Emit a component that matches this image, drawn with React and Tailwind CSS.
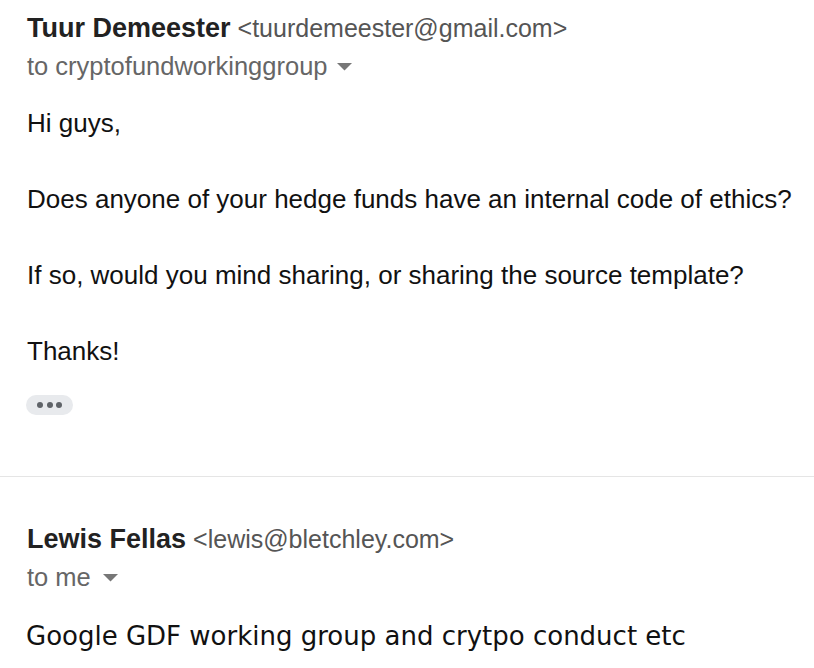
import React from 'react';

const sans = { fontFamily: '"Liberation Sans", Arial, Helvetica, sans-serif' };

const Caret = ({ gap }) => (
  <svg width="15" height="8" viewBox="0 0 15 8" className={gap}>
    <path d="M0 0 L15 0 L7.5 7.5 Z" fill="#777777" />
  </svg>
);

const Header = ({ name, email, to, caretGap }) => (
  <div className="pl-[27px]" style={sans}>
    <div className="flex items-baseline h-[30px] leading-[30px]">
      <span className="text-[27px] font-bold text-[#222222]">{name}</span>
      <span className="ml-[7px] text-[25px] text-[#555555]">{email}</span>
    </div>
    <div className="flex items-center mt-[8px] h-[30px] leading-[30px] text-[25.5px] text-[#666666]">
      <span>{to}</span>
      <Caret gap={caretGap} />
    </div>
  </div>
);

export default function App() {
  return (
    <div className="w-[814px] h-[668px] bg-white overflow-hidden">
      <div className="pt-[13px]">
        <Header
          name="Tuur Demeester"
          email="<tuurdemeester@gmail.com>"
          to="to cryptofundworkinggroup"
          caretGap="ml-[9px] mt-[1px]"
        />
        <div className="pl-[27px] mt-[23px] text-[26px] leading-[38px] text-[#111111]" style={sans}>
          <p>Hi guys,</p>
          <p>&nbsp;</p>
          <p>Does anyone of your hedge funds have an internal code of ethics?</p>
          <p>&nbsp;</p>
          <p>If so, would you mind sharing, or sharing the source template?</p>
          <p>&nbsp;</p>
          <p>Thanks!</p>
        </div>
        <div className="pl-[26px] mt-[25px]">
          <div className="w-[47px] h-[20px] rounded-full bg-[#e8eaed] flex items-center justify-center gap-[3.5px]">
            <span className="w-[6px] h-[6px] rounded-full bg-[#5f6368]" />
            <span className="w-[6px] h-[6px] rounded-full bg-[#5f6368]" />
            <span className="w-[6px] h-[6px] rounded-full bg-[#5f6368]" />
          </div>
        </div>
      </div>
      <div className="mt-[61px] border-t border-[#e5e5e5]" />
      <div className="pt-[47px]">
        <Header name="Lewis Fellas" email="<lewis@bletchley.com>" to="to me" caretGap="ml-[12px] mt-[1px]" />
        <p
          className="pl-[26px] mt-[28px] h-[32px] leading-[32px] text-[26px] text-[#111111]"
          style={{ fontFamily: '"DejaVu Sans", Verdana, sans-serif' }}
        >
          Google GDF working group and crytpo conduct etc
        </p>
      </div>
    </div>
  );
}
